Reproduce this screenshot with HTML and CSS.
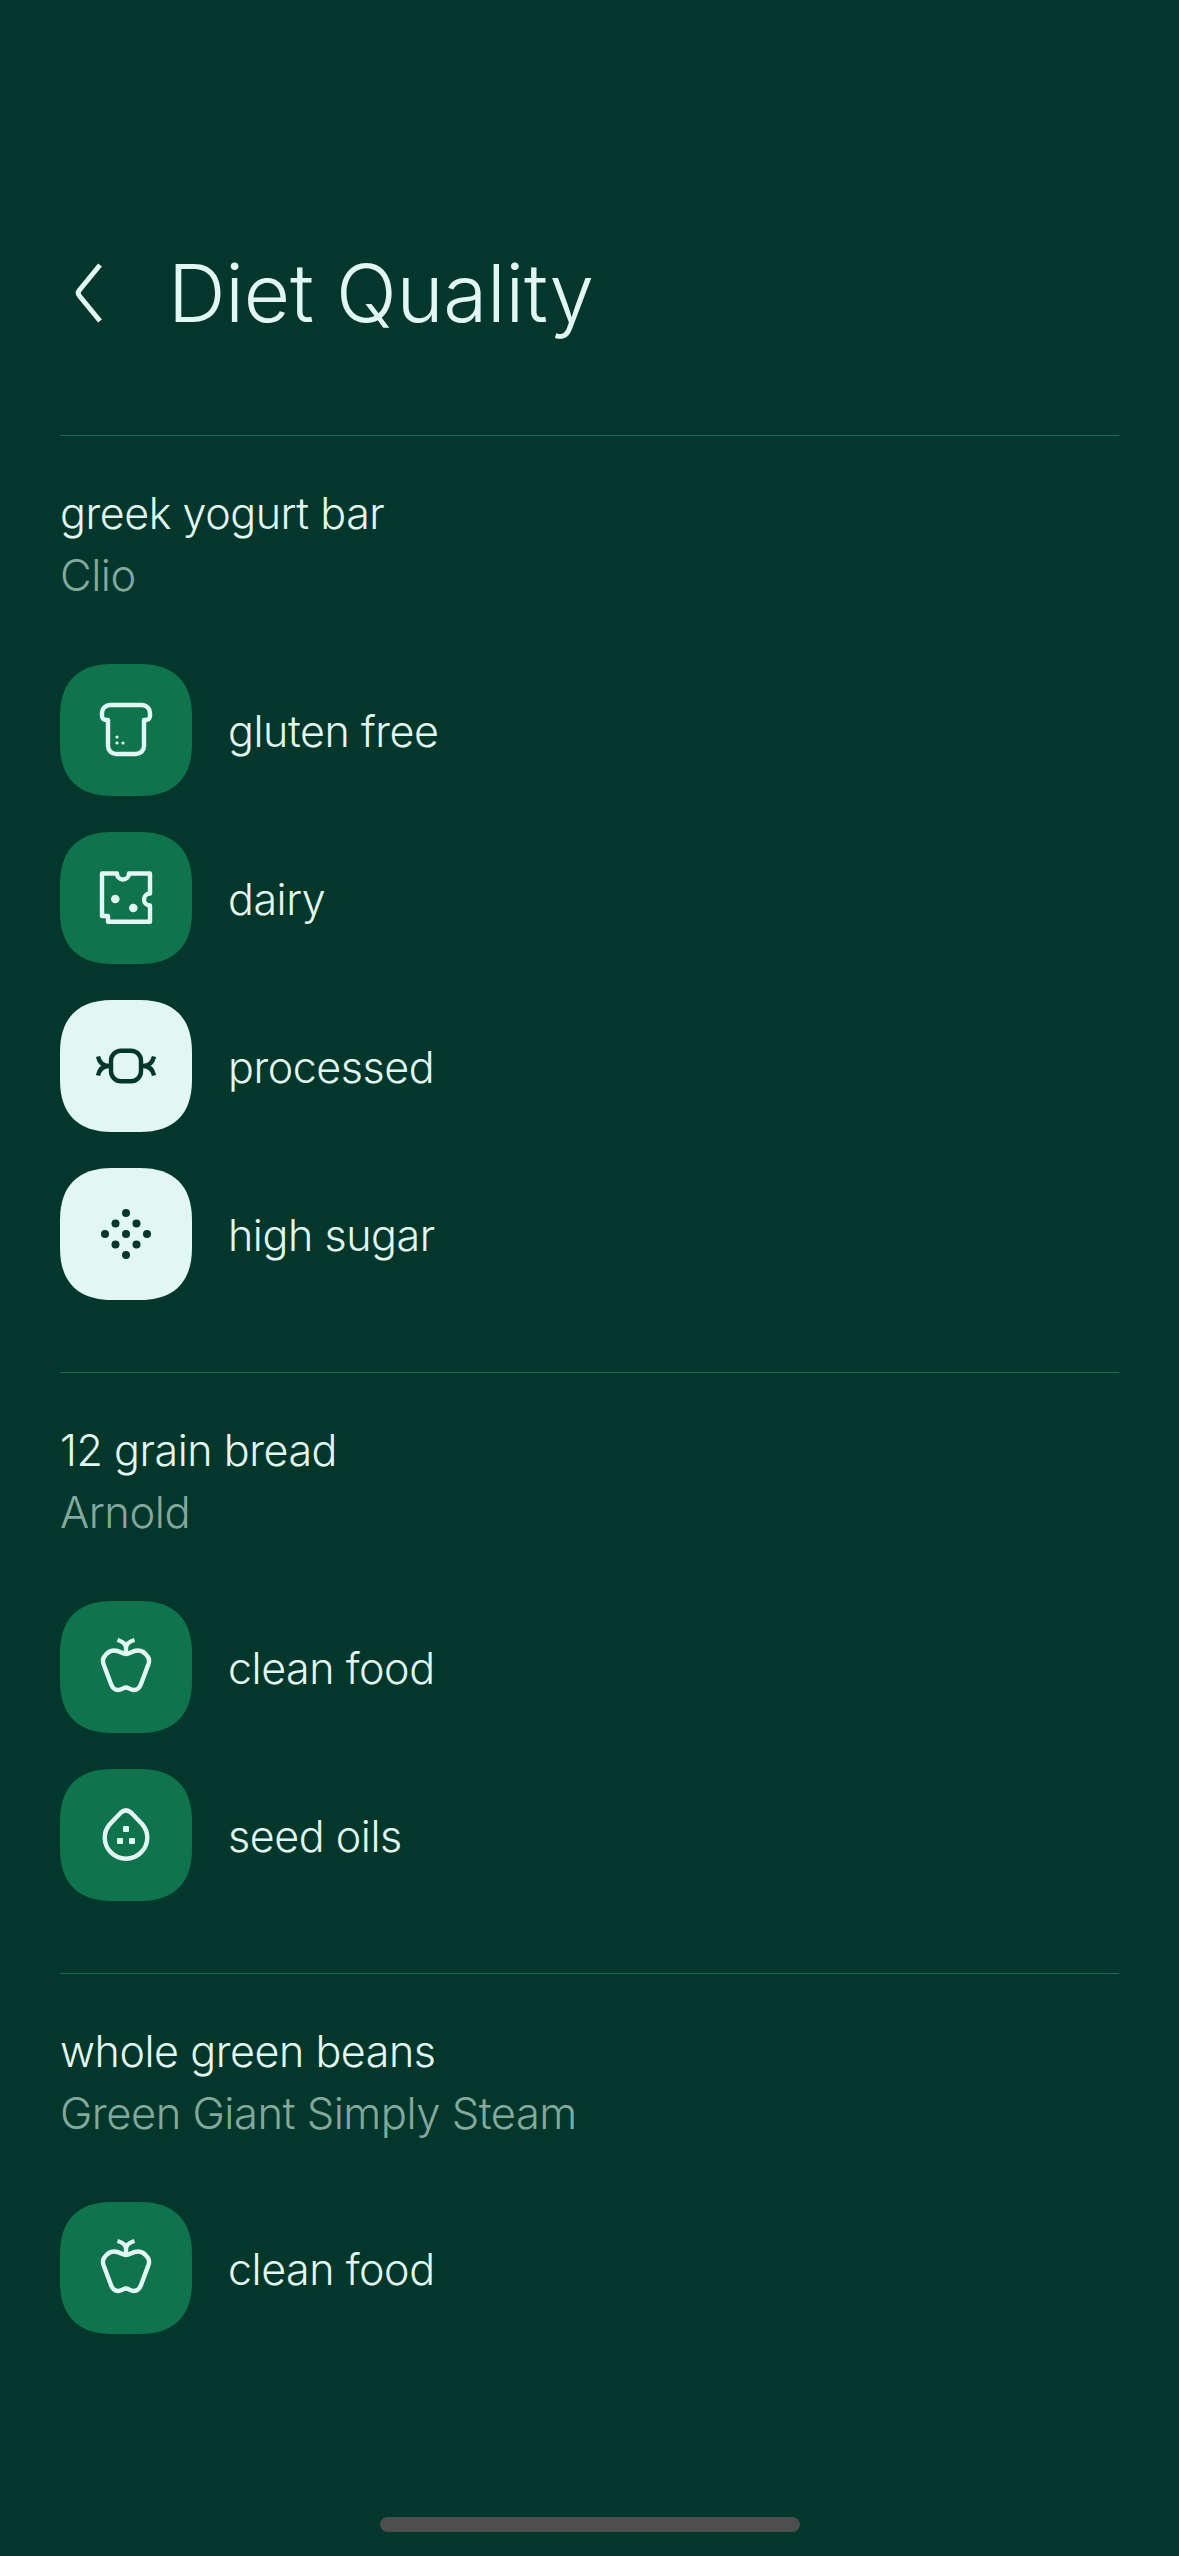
FILE: index.html
```html
<!DOCTYPE html>
<html lang="en">
<head>
    <meta charset="UTF-8">
    <meta name="viewport" content="width=device-width, initial-scale=1.0">
    <title>Diet Quality</title>
    <link rel="stylesheet" href="styles.css">
</head>
<body>
    <div class="page">
        <header class="header">
            <svg class="back" viewBox="0 0 32 64" aria-hidden="true">
                <path d="M26 4 L5.5 29 Q3 32 5.5 35 L26 60"/>
            </svg>
            <h1>Diet Quality</h1>
        </header>

        <main>
            <section class="food">
                <h2>greek yogurt bar</h2>
                <p class="brand">Clio</p>
                <ul class="tags">
                    <li>
                        <svg class="tile good" viewBox="0 0 132 132" aria-hidden="true">
                            <path class="bg" d="M52 0H80C114 0 132 18 132 52V80C132 114 114 132 80 132H52C18 132 0 114 0 80V52C0 18 18 0 52 0Z"/>
                            <path class="line" d="M48 56V82a8 8 0 0 0 8 8H76a8 8 0 0 0 8-8V56h2a4 4 0 0 0 4-4V49a8 8 0 0 0-8-8H50a8 8 0 0 0-8 8v3a4 4 0 0 0 4 4z"/>
                            <circle class="dot" cx="57" cy="73" r="1.6"/>
                            <circle class="dot" cx="57" cy="79" r="1.6"/>
                            <circle class="dot" cx="63" cy="79" r="1.6"/>
                        </svg>
                        <span>gluten free</span>
                    </li>
                    <li>
                        <svg class="tile good" viewBox="0 0 132 132" aria-hidden="true">
                            <path class="bg" d="M52 0H80C114 0 132 18 132 52V80C132 114 114 132 80 132H52C18 132 0 114 0 80V52C0 18 18 0 52 0Z"/>
                            <path class="line" d="M42 41.5H57a6 6 0 0 0 12 0H90V61.5a6 6 0 0 0 0 12V89.7H48V84H42Z"/>
                            <circle class="dot" cx="55.3" cy="67" r="4.3"/>
                            <circle class="dot" cx="73.3" cy="76" r="4.3"/>
                        </svg>
                        <span>dairy</span>
                    </li>
                    <li>
                        <svg class="tile bad" viewBox="0 0 132 132" aria-hidden="true">
                            <path class="bg" d="M52 0H80C114 0 132 18 132 52V80C132 114 114 132 80 132H52C18 132 0 114 0 80V52C0 18 18 0 52 0Z"/>
                            <rect class="line" x="51" y="50.7" width="30" height="30.6" rx="10"/>
                            <path class="line butt" d="M38 56.5C39 61 42 66 49 66C42 66 39 71 38 75.5M94 56.5C93 61 90 66 83 66C90 66 93 71 94 75.5"/>
                        </svg>
                        <span>processed</span>
                    </li>
                    <li>
                        <svg class="tile bad" viewBox="0 0 132 132" aria-hidden="true">
                            <path class="bg" d="M52 0H80C114 0 132 18 132 52V80C132 114 114 132 80 132H52C18 132 0 114 0 80V52C0 18 18 0 52 0Z"/>
                            <circle class="dot" cx="66" cy="45" r="4"/>
                            <circle class="dot" cx="55.5" cy="55.5" r="4"/>
                            <circle class="dot" cx="76.5" cy="55.5" r="4"/>
                            <circle class="dot" cx="45" cy="66" r="4"/>
                            <circle class="dot" cx="66" cy="66" r="4"/>
                            <circle class="dot" cx="87" cy="66" r="4"/>
                            <circle class="dot" cx="55.5" cy="76.5" r="4"/>
                            <circle class="dot" cx="76.5" cy="76.5" r="4"/>
                            <circle class="dot" cx="66" cy="87" r="4"/>
                        </svg>
                        <span>high sugar</span>
                    </li>
                </ul>
            </section>

            <section class="food">
                <h2>12 grain bread</h2>
                <p class="brand">Arnold</p>
                <ul class="tags">
                    <li>
                        <svg class="tile good" viewBox="0 0 132 132" aria-hidden="true">
                            <path class="bg" d="M52 0H80C114 0 132 18 132 52V80C132 114 114 132 80 132H52C18 132 0 114 0 80V52C0 18 18 0 52 0Z"/>
                            <path class="line" d="M66 53C62 53 60 49.5 54 49.5C49 49.5 46 53 44 56C42.5 58.5 42.5 60 43.5 63L51 83C52.5 87 55 89 58 89C62 89 63 86.5 66 86.5C69 86.5 70 89 74 89C77 89 79.5 87 81 83L88.5 63C89.5 60 89.5 58.5 88 56C86 53 83 49.5 78 49.5C72 49.5 70 53 66 53Z"/>
                            <path class="line butt" d="M66 52V47C66 42 61 40 57.5 39M66 47C66 42 71 40 74.5 39"/>
                        </svg>
                        <span>clean food</span>
                    </li>
                    <li>
                        <svg class="tile good" viewBox="0 0 132 132" aria-hidden="true">
                            <path class="bg" d="M52 0H80C114 0 132 18 132 52V80C132 114 114 132 80 132H52C18 132 0 114 0 80V52C0 18 18 0 52 0Z"/>
                            <path class="line" d="M61 43.5Q66 39.3 71 43.5L82 55C85.5 59 87.3 63 87.3 68.4C87.3 80 77.8 89.7 66 89.7C54.2 89.7 44.7 80 44.7 68.4C44.7 63 46.5 59 50 55Z"/>
                            <rect class="dot" x="63" y="57" width="6" height="6" rx="1"/>
                            <rect class="dot" x="57" y="69" width="6" height="6" rx="1"/>
                            <rect class="dot" x="69" y="69" width="6" height="6" rx="1"/>
                        </svg>
                        <span>seed oils</span>
                    </li>
                </ul>
            </section>

            <section class="food">
                <h2>whole green beans</h2>
                <p class="brand">Green Giant Simply Steam</p>
                <ul class="tags">
                    <li>
                        <svg class="tile good" viewBox="0 0 132 132" aria-hidden="true">
                            <path class="bg" d="M52 0H80C114 0 132 18 132 52V80C132 114 114 132 80 132H52C18 132 0 114 0 80V52C0 18 18 0 52 0Z"/>
                            <path class="line" d="M66 53C62 53 60 49.5 54 49.5C49 49.5 46 53 44 56C42.5 58.5 42.5 60 43.5 63L51 83C52.5 87 55 89 58 89C62 89 63 86.5 66 86.5C69 86.5 70 89 74 89C77 89 79.5 87 81 83L88.5 63C89.5 60 89.5 58.5 88 56C86 53 83 49.5 78 49.5C72 49.5 70 53 66 53Z"/>
                            <path class="line butt" d="M66 52V47C66 42 61 40 57.5 39M66 47C66 42 71 40 74.5 39"/>
                        </svg>
                        <span>clean food</span>
                    </li>
                </ul>
            </section>
        </main>

        <div class="home-bar"></div>
    </div>
</body>
</html>
```

FILE: styles.css
```css
* {
    box-sizing: border-box;
}

body {
    margin: 0;
    background-color: #03372b;
    color: #e2f7f1;
    font-family: Inter, "Noto Sans", sans-serif;
    font-weight: 300;
}

.page {
    display: flex;
    flex-direction: column;
    min-height: 2556px;
    padding: 0 60px;
}

.header {
    display: flex;
    align-items: center;
    gap: 62px;
    height: 435px;
    padding-top: 151px;
}

.back {
    width: 32px;
    height: 64px;
    margin-left: 14px;
    flex: none;
    fill: none;
    stroke: #e2f7f1;
    stroke-width: 5;
}

h1 {
    margin: 0;
    font-size: 80px;
    font-weight: 300;
    line-height: 100px;
    letter-spacing: -0.2px;
}

main {
    flex: 1;
}

.food {
    padding: 46px 0 72px;
    border-top: 1px solid #1f6a55;
}

h2 {
    margin: 0;
    font-size: 43px;
    font-weight: 300;
    line-height: 62px;
    letter-spacing: -0.45px;
}

.brand {
    margin: 0;
    font-size: 43.5px;
    line-height: 63px;
    letter-spacing: -0.5px;
    color: #83a89e;
}

.tags {
    display: flex;
    flex-direction: column;
    gap: 36px;
    margin: 57px 0 0;
    padding: 0;
    list-style: none;
}

.tags li {
    display: flex;
    align-items: center;
    gap: 36px;
    font-size: 43px;
    letter-spacing: -0.45px;
}

.tags span {
    padding-top: 2px;
}

.tile {
    width: 132px;
    height: 132px;
    flex: none;
}

.tile .line {
    fill: none;
    stroke-width: 4.4;
    stroke-linejoin: round;
    stroke-linecap: round;
}

.tile .butt {
    stroke-linecap: butt;
}

.good .bg {
    fill: #0f744d;
}

.good .line {
    stroke: #e2f7f1;
}

.good .dot {
    fill: #e2f7f1;
}

.bad .bg {
    fill: #e2f7f1;
}

.bad .line {
    stroke: #03372b;
}

.bad .dot {
    fill: #03372b;
}

.home-bar {
    align-self: center;
    width: 420px;
    height: 15px;
    margin-bottom: 24px;
    border-radius: 8px;
    background-color: #4d4d4d;
}
```
